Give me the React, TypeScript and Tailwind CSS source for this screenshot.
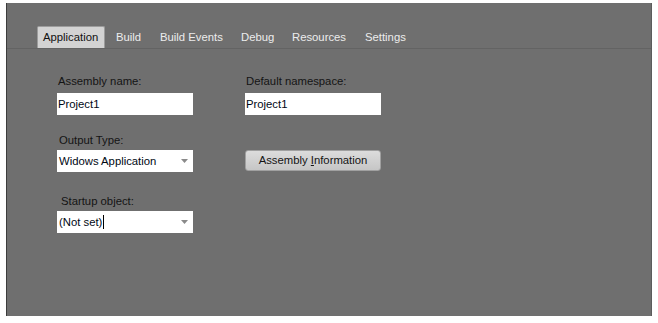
const tabs = [
  { label: "Application", w: "w-[68px]", active: true },
  { label: "Build", w: "w-[44px]" },
  { label: "Build Events", w: "w-[81px]" },
  { label: "Debug", w: "w-[51px]" },
  { label: "Resources", w: "w-[73px]" },
  { label: "Settings", w: "w-[60px]" },
];

function Label({ text, indent }: { text: string; indent: string }) {
  return <div className={`h-[14px] leading-[14px] text-[#141414] ${indent}`}>{text}</div>;
}

function TextBox({ value }: { value: string }) {
  return (
    <div className="w-[136px] h-[22px] bg-white flex items-center pl-[1px] text-[#000814]">
      {value}
    </div>
  );
}

function ComboBox({ value, caret }: { value: string; caret?: boolean }) {
  return (
    <div className="w-[136px] h-[22px] bg-white flex items-center pl-[2px] pr-[5px] text-[#000814]">
      <span>{value}</span>
      {caret && <span className="w-[1px] h-[14px] bg-black ml-[1px]" />}
      <svg className="ml-auto" width="7" height="4" viewBox="0 0 7 4">
        <path d="M0 0 L7 0 L3.5 4 Z" fill="#8a8a8a" />
      </svg>
    </div>
  );
}

export default function App() {
  return (
    <div
      className="w-[658px] h-[323px] bg-white pl-[6px] pt-[3px] text-[11.3px]"
      style={{ fontFamily: '"Liberation Sans", Arial, sans-serif' }}
    >
      <div className="w-[646px] h-[313px] bg-[#6f6f6f] border-l border-[#3c3c3c] border-r-[#5c5c5c] border-r">
        <div className="flex items-end h-[46px] pl-[30px] border-b border-[#636363]">
          {tabs.map((t) =>
            t.active ? (
              <div key={t.label} className="mr-[5px]">
                <div
                  className={`${t.w} h-[22px] bg-[#d3d3d3] border border-b-0 border-[#9c9c9c] rounded-t-[2px] pl-[5px] flex items-center text-[#111]`}
                >
                  {t.label}
                </div>
              </div>
            ) : (
              <div
                key={t.label}
                className={`${t.w} h-[22px] pl-[6px] flex items-center text-[#ececec]`}
              >
                {t.label}
              </div>
            )
          )}
        </div>

        <div className="pl-[50px] pt-[25px]">
          <div className="flex gap-[52px]">
            <div className="flex flex-col gap-[5px]">
              <Label text="Assembly name:" indent="pl-[1px]" />
              <TextBox value="Project1" />
            </div>
            <div className="flex flex-col gap-[5px]">
              <Label text="Default namespace:" indent="pl-[1px]" />
              <TextBox value="Project1" />
            </div>
          </div>

          <div className="flex gap-[52px] mt-[18px]">
            <div className="flex flex-col gap-[3px]">
              <Label text="Output Type:" indent="pl-[2px]" />
              <ComboBox value="Widows Application" />
            </div>
            <div className="pt-[17px]">
              <div className="w-[136px] h-[21px] rounded-[3px] border border-[#a0a0a0] bg-gradient-to-b from-[#dcdcdc] to-[#c6c6c6] flex items-center justify-center text-[#141414]">
                Assembly&nbsp;<span className="underline">I</span>nformation
              </div>
            </div>
          </div>

          <div className="flex flex-col gap-[3px] mt-[22px]">
            <Label text="Startup object:" indent="pl-[4px]" />
            <ComboBox value="(Not set)" caret />
          </div>
        </div>
      </div>
    </div>
  );
}
